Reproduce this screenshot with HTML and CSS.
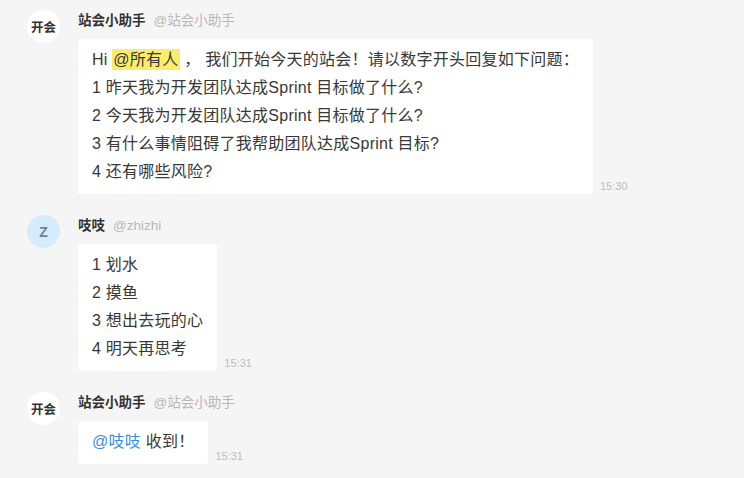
FILE: index.html
```html
<!DOCTYPE html>
<html lang="zh-CN">
<head>
    <meta charset="UTF-8">
    <meta name="viewport" content="width=device-width, initial-scale=1.0">
    <title>站会</title>
    <link rel="stylesheet" href="styles.css">
</head>
<body>
    <div class="chat">
        <div class="msg">
            <div class="avatar">开会</div>
            <div class="msg-body">
                <div class="msg-head"><span class="name">站会小助手</span><span class="handle">@站会小助手</span></div>
                <div class="msg-row">
                    <div class="bubble">
                        <p>Hi <span class="mention-all">@所有人</span> ， 我们开始今天的站会！请以数字开头回复如下问题：</p>
                        <p>1 昨天我为开发团队达成Sprint 目标做了什么?</p>
                        <p>2 今天我为开发团队达成Sprint 目标做了什么?</p>
                        <p>3 有什么事情阻碍了我帮助团队达成Sprint 目标?</p>
                        <p>4 还有哪些风险?</p>
                    </div>
                    <span class="time">15:30</span>
                </div>
            </div>
        </div>

        <div class="msg">
            <div class="avatar avatar-z">Z</div>
            <div class="msg-body">
                <div class="msg-head"><span class="name">吱吱</span><span class="handle">@zhizhi</span></div>
                <div class="msg-row">
                    <div class="bubble">
                        <p>1 划水</p>
                        <p>2 摸鱼</p>
                        <p>3 想出去玩的心</p>
                        <p>4 明天再思考</p>
                    </div>
                    <span class="time">15:31</span>
                </div>
            </div>
        </div>

        <div class="msg">
            <div class="avatar">开会</div>
            <div class="msg-body">
                <div class="msg-head"><span class="name">站会小助手</span><span class="handle">@站会小助手</span></div>
                <div class="msg-row">
                    <div class="bubble">
                        <p><span class="mention">@吱吱</span> 收到！</p>
                    </div>
                    <span class="time">15:31</span>
                </div>
            </div>
        </div>
    </div>
</body>
</html>
```

FILE: styles.css
```css
body { margin: 0; background: #f5f5f5; font-family: "Liberation Sans", "Noto Sans CJK SC", sans-serif; color: #333; }
.chat { padding: 10px 0 0 27px; display: flex; flex-direction: column; gap: 21px; }
.msg { display: flex; gap: 18px; align-items: flex-start; }
.avatar { width: 33px; height: 33px; border-radius: 50%; background: #fff; flex: none; display: flex; align-items: center; justify-content: center; font-size: 12.5px; font-weight: bold; color: #333; }
.avatar-z { background: #d5ecfc; color: #6b8393; font-size: 14px; }
.msg-head { height: 21px; line-height: 21px; margin-bottom: 8px; font-size: 13.5px; display: flex; gap: 8px; }
.name { color: #333; font-weight: 600; }
.handle { color: #b8b8b8; }
.msg-row { display: flex; align-items: flex-end; gap: 7px; }
.bubble { background: #fff; border-radius: 4px; padding: 7px 14px 8px; font-size: 16px; line-height: 28px; color: #383838; letter-spacing: 0.25px; }
.bubble p { margin: 0; white-space: nowrap; }
.mention-all { background: #fcec6e; padding: 2px 1px; }
.mention { color: #3a8ee2; }
.time { font-size: 11px; line-height: 14px; color: #bdbdbd; padding-bottom: 1px; }
```
